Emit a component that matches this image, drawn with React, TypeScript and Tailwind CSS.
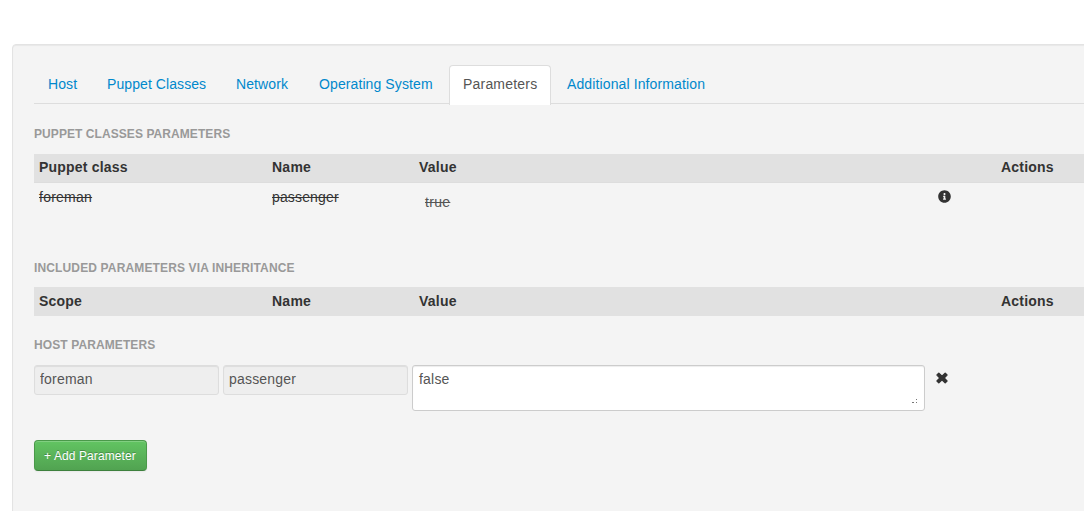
import { FaInfoCircle } from 'react-icons/fa';

const tabs = [
  { label: 'Host', cls: 'w-[59px] pl-[14px] text-[#0088cc]', text: 'tracking-[0.1px]' },
  { label: 'Puppet Classes', cls: 'w-[129px] pl-[14px] text-[#0088cc]', text: 'tracking-[0.08px]' },
  { label: 'Network', cls: 'w-[83px] pl-[14px] text-[#0088cc]', text: 'tracking-[0.1px]' },
  { label: 'Operating System', cls: 'w-[144px] pl-[14px] text-[#0088cc]', text: 'tracking-[0.1px]' },
  {
    label: 'Parameters',
    cls: 'w-[102px] pl-[13px] rounded-t border border-b-0 border-[#dddddd] bg-white text-[#555555]',
    text: 'tracking-[0.2px]',
  },
  { label: 'Additional Information', cls: 'pl-[16px] text-[#0088cc]', text: 'tracking-[0.12px]' },
];

function Heading({ children, className }: { children: string; className: string }) {
  return <h6 className={`h-5 text-[12px] leading-5 font-bold whitespace-nowrap text-[#999999] ${className}`}>{children}</h6>;
}

function TableHead({ first, className }: { first: string; className: string }) {
  return (
    <div
      className={`grid h-[29px] grid-cols-[233px_147px_582px_1fr] border-b bg-[#e1e1e1] pl-[5px] text-[14px] font-bold text-[#333333] ${className}`}
    >
      <span className="tracking-[0.2px]">{first}</span>
      <span className="tracking-[0.25px]">Name</span>
      <span className="tracking-[0.25px]">Value</span>
      <span className="tracking-[0.2px]">Actions</span>
    </div>
  );
}

const inputStyle =
  'h-[30px] w-[185px] rounded-[3px] border border-[#dddddd] bg-[#eeeeee] px-[5px] pb-[2px] text-[14px] leading-5 tracking-[0.2px] text-[#555555] outline-none shadow-[inset_0_1px_1px_rgba(0,0,0,0.075)]';

export default function App() {
  return (
    <div className="h-[511px] w-full overflow-hidden bg-white pt-11 pl-3 font-['Liberation_Sans',Arial,sans-serif] text-[14px] text-[#333333]">
      <main className="h-[520px] w-[1140px] rounded border border-[#e3e3e3] bg-[#f4f4f4] pt-5 pl-[21px] shadow-[inset_0_1px_1px_rgba(0,0,0,0.05)]">
        <nav className="flex h-[39px] border-b border-[#dddddd]">
          {tabs.map((t) => (
            <a key={t.label} className={`h-10 shrink-0 whitespace-nowrap leading-5 ${t.label === 'Parameters' ? 'pt-[8px]' : 'pt-[9px]'} ${t.cls}`}>
              <span className={t.text}>{t.label}</span>
            </a>
          ))}
        </nav>

        <Heading className="mt-5 tracking-[0.07px]">PUPPET CLASSES PARAMETERS</Heading>
        <TableHead first="Puppet class" className="mt-[10px] border-[#dddddd] leading-[27px]" />
        <div className="grid h-[75px] grid-cols-[233px_153px_513px_1fr] pl-[5px] leading-5">
          <s className="mt-[4px] tracking-[0.25px]">foreman</s>
          <s className="mt-[4px] tracking-[0.15px]">passenger</s>
          <s className="mt-[9px] tracking-[0.3px] text-[#555555]">true</s>
          <FaInfoCircle className="mt-[7px] size-[13px]" />
        </div>

        <Heading className="tracking-[0.14px]">INCLUDED PARAMETERS VIA INHERITANCE</Heading>
        <TableHead first="Scope" className="mt-[9px] border-[#e1e1e1] leading-[29px]" />
        <Heading className="mt-[19px] tracking-[0.1px]">HOST PARAMETERS</Heading>

        <div className="mt-[10px] flex h-[46px] gap-1">
          <input className={inputStyle} defaultValue="foreman" readOnly />
          <input className={inputStyle} defaultValue="passenger" readOnly />
          <div className="relative h-[46px] w-[513px]">
            <textarea
              className="block size-full resize-none rounded-[3px] border border-[#cccccc] bg-white px-[6px] py-[3px] text-[14px] leading-5 tracking-[0.2px] text-[#555555] outline-none shadow-[inset_0_1px_1px_rgba(0,0,0,0.075)]"
              defaultValue="false"
            />
            <svg className="absolute right-[7px] bottom-[7px] h-[5px] w-[6px]" viewBox="0 0 6 5" fill="#777777">
              <path d="M4 0h1v1H4zM0 3h2v1H0zM4 3h1v1H4z" />
            </svg>
          </div>
          <svg className="mt-[7px] ml-[7px] h-[12px] w-[12px]" viewBox="0 0 12 12" fill="#333333" stroke="#333333" strokeWidth="1.4" strokeLinejoin="round">
            <path d="M2.8 1.2 6 4.2l3.2-3L11 3 8.1 6l2.9 3-1.8 1.8L6 7.8l-3.2 3L1 9l2.9-3L1 3Z" />
          </svg>
        </div>

        <button className="mt-[29px] flex h-[31px] w-[113px] items-center rounded border border-[#4a994a] border-b-[#3d803d] bg-linear-to-b from-[#62c462] to-[#51a351] pl-[9px] text-[12px] leading-5 tracking-[0.1px] whitespace-nowrap text-white [text-shadow:0_-1px_0_rgba(0,0,0,0.25)] shadow-[inset_0_1px_0_rgba(255,255,255,0.2),0_1px_2px_rgba(0,0,0,0.05)]">
          + Add Parameter
        </button>
      </main>
    </div>
  );
}
